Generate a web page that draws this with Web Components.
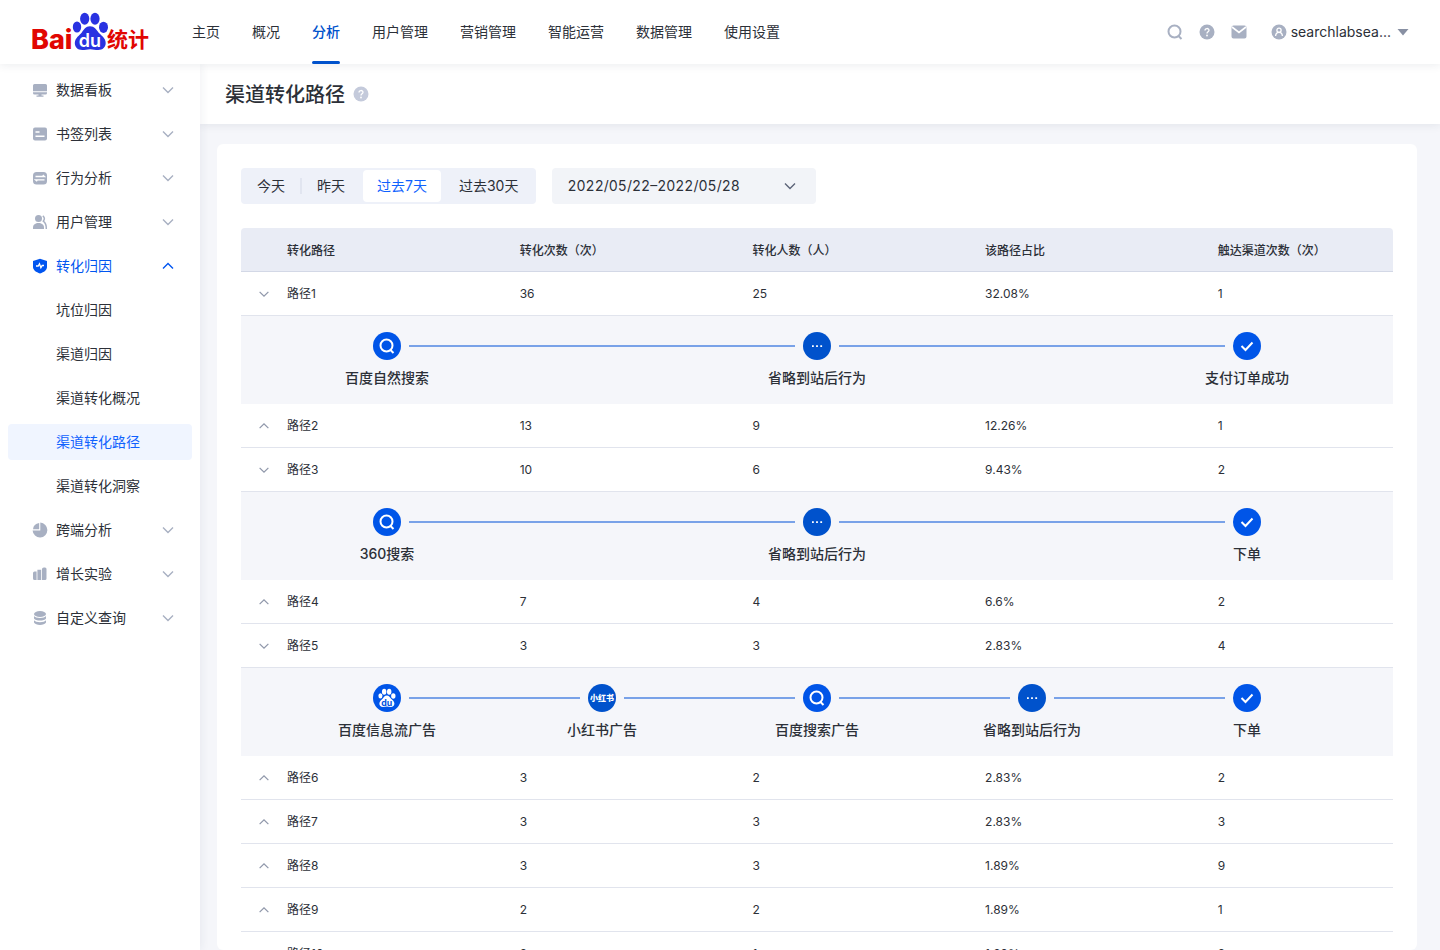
<!DOCTYPE html>
<html lang="zh-CN">
<head>
<meta charset="utf-8">
<title>渠道转化路径 - 百度统计</title>
<style>
  :root {
    --blue: #0055f0;
    --deep-blue: #0052cc;
    --ink: #2c3038;
    --muted: #a8b0c2;
    --canvas: #f5f6fa;
  }
  html, body { margin: 0; height: 100%; }
  body {
    font: 14px/20px Inter, "Noto Sans CJK SC", sans-serif;
    color: var(--ink);
    background: var(--canvas);
  }
</style>
</head>
<body>
<app-shell>
  <site-header slot="header"></site-header>
  <side-nav slot="nav"></side-nav>
  <page-title slot="title">渠道转化路径</page-title>
  <content-card>
    <filter-bar slot="filters"></filter-bar>
    <path-table></path-table>
  </content-card>
</app-shell>

<script>
const define = (name, render) => customElements.define(name, class extends HTMLElement {
  constructor() {
    super();
    this.attachShadow({ mode: "open" });
  }
  connectedCallback() {
    this.shadowRoot.innerHTML = render(this);
  }
});

const ICONS = {
  search: '<circle cx="7.5" cy="7.5" r="6" fill="none" stroke="currentColor" stroke-width="2"/><path d="M11.5 12 14.5 15" stroke="currentColor" stroke-width="2"/>',
  help: '<circle cx="8" cy="8" r="7.5" fill="currentColor"/><path d="M6 6.5c0-2.600 4-2.600 4-.2C10 7.700 8 7.800 8 9.400" fill="none" stroke="#fff" stroke-width="1.300"/><circle cx="8" cy="11.500" r=".9" fill="#fff"/>',
  mail: '<path d="M.5 3.500a2 2 0 0 1 2-2h11a2 2 0 0 1 2 2v9a2 2 0 0 1-2 2h-11a2 2 0 0 1-2-2z" fill="currentColor"/><path d="m1 3 7 5.500L15 3" fill="none" stroke="#fff" stroke-width="1.600"/>',
  user: '<circle cx="8" cy="8" r="7.500" fill="currentColor"/><circle cx="8" cy="6.300" r="2.100" fill="none" stroke="#fff" stroke-width="1.300"/><path d="M4.600 12c.2-2.300 1.600-3.600 3.400-3.600s3.200 1.300 3.400 3.600" fill="none" stroke="#fff" stroke-width="1.300"/>',
  caret: '<path d="M2.500 5h11L8 11.500z" fill="currentColor"/>',
  down: '<path d="m3 5.500 5 5 5-5" fill="none" stroke="currentColor" stroke-width="1.400"/>',
  up: '<path d="m3 10.500 5-5 5 5" fill="none" stroke="currentColor" stroke-width="1.400"/>',
  board: '<path d="M1 3.500A1.500 1.500 0 0 1 2.500 2h11A1.500 1.500 0 0 1 15 3.500V9.300H1zM1 10.200h14v.8a1.500 1.500 0 0 1-1.500 1.500h-11A1.500 1.500 0 0 1 1 11zM6.500 12h3v1.500h2V14.700h-7V13.500h2z" fill="currentColor"/>',
  bookmark: '<rect x="1" y="1.500" width="14" height="13" rx="2" fill="currentColor"/><path d="M3.500 6h4M3.500 10.300h9" stroke="#fff" stroke-width="1.400"/>',
  behavior: '<rect x="1" y="2" width="14" height="12.500" rx="3.500" fill="currentColor"/><path d="M3.500 6.500h9L10.800 5M12.500 9.800h-9l1.700 1.500" fill="none" stroke="#fff" stroke-width="1.300"/>',
  users: '<circle cx="6.500" cy="4.500" r="3.500" fill="currentColor"/><path d="M1 15v-1.500C1 10.500 3.500 9 6.500 9S12 10.500 12 13.500V15z" fill="currentColor"/><path d="M10.800 1.800c2 1.400 2 3.500.5 5.400 2 1.500 3.200 3.600 3 7.800" fill="none" stroke="currentColor" stroke-width="1.500"/>',
  shield: '<path d="M8 .8 15 3v6c0 3-3 5.200-7 6.500C4 14.200 1 12 1 9V3z" fill="currentColor"/><path d="M4 8h2.200l1.300-2.200 1.400 3.900L10.200 7.500H12" fill="none" stroke="#fff" stroke-width="1.300"/>',
  pie: '<path d="M8.300.6a7.400 7.400 0 1 1-7.700 7.900h7.700z" fill="currentColor"/><path d="M7.200 1v6.300H1A7 7 0 0 1 7.200 1" fill="currentColor"/>',
  bars: '<path d="M1 7a1.500 1.500 0 0 1 1.500-1.500H4.600V14H2.500A1.500 1.500 0 0 1 1 12.500zM5.400 3.800h3.700V14H5.400zM9.900 3.500a2 2 0 0 1 2-2H13a1.500 1.500 0 0 1 1.500 1.500v9.500A1.500 1.500 0 0 1 13 14H9.900z" fill="currentColor"/>',
  database: '<ellipse cx="8" cy="4" rx="6" ry="3" fill="currentColor"/><path d="M2 6c1.500 2.600 10.500 2.600 12 0v2.500c-1.500 2.800-10.500 2.800-12 0zM2 10.200c1.500 2.600 10.500 2.600 12 0v2.300c-1.500 3.300-10.500 3.300-12 0z" fill="currentColor"/>',
  dots: '<path d="M3 7.200h1.800V9H3zm4.100 0h1.800V9H7.100zm4.200 0h1.800V9h-1.800z" fill="currentColor"/>',
  check: '<path d="m2.500 8 4 4 7-7.500" fill="none" stroke="currentColor" stroke-width="2"/>'
};

define("ui-icon", el => `
  <style>
    :host { display: inline-flex; flex: none; width: 16px; height: 16px; }
    svg { width: 100%; height: 100%; }
  </style>
  <svg viewBox="0 0 16 16" aria-hidden="true">${ICONS[el.getAttribute("name")]}</svg>`);

const PAW = `
  <ellipse cx="77" cy="27" rx="4.200" ry="5.500"/>
  <ellipse cx="84.700" cy="18.700" rx="4.600" ry="6"/>
  <ellipse cx="95" cy="18.700" rx="4.600" ry="6"/>
  <ellipse cx="103.500" cy="27.300" rx="4.500" ry="5.600"/>
  <path d="M90 26.300c4.500 0 6.200 3.200 8.500 6.200 2.300 2.800 7.200 5.300 7.200 10.500 0 4.200-3 7-7.500 7-3 0-5-.8-8-.8s-5 .8-8 .8c-4.500 0-7.400-2.800-7.400-7 0-5.200 5-7.700 7-10.500 2.200-3 3.700-6.200 8.200-6.200z"/>`;

define("brand-logo", () => `
  <style>
    :host { display: block; flex: none; }
    a, svg { display: block; }
    text { font-weight: 800; }
    .du { font-weight: 600; }
    .name { font-weight: 700; }
  </style>
  <a href="#" aria-label="百度统计">
    <svg width="118" height="40" viewBox="32 12 118 40">
      <text x="31" y="49" font-size="27" fill="#e10602">Bai</text>
      <g fill="#2932e1">${PAW}</g>
      <text class="du" x="90" y="47" font-size="18" text-anchor="middle" fill="#fff">du</text>
      <text class="name" x="107" y="47" font-size="21" fill="#e10602">统计</text>
    </svg>
  </a>`);

define("site-header", () => `
  <style>
    :host {
      display: flex; align-items: center; box-sizing: border-box; height: 64px; padding: 0 29px 0 32px;
      background: #fff; box-shadow: 0 2px 8px rgba(40, 50, 80, .08);
    }
    nav { display: flex; gap: 32px; margin-left: 42px; align-self: stretch; }
    nav a {
      display: flex; align-items: center; box-sizing: border-box; color: inherit; text-decoration: none;
    }
    nav a[aria-current] { color: var(--deep-blue); font-weight: 500; position: relative; }
    nav a[aria-current]::after {
      content: ""; position: absolute; left: 0; right: 0; bottom: 0; height: 3px;
      border-radius: 2px; background: var(--deep-blue);
    }
    .tools { display: flex; align-items: center; gap: 16px; margin-left: auto; }
    button {
      display: flex; align-items: center; padding: 0; border: 0; background: none;
      font: inherit; color: var(--muted); cursor: pointer;
    }
    .account { margin-left: 8px; gap: 4px; }
    .account span { color: var(--ink); }
    .account ui-icon:last-child { color: #8890a3; }
  </style>
  <brand-logo></brand-logo>
  <nav aria-label="主导航">
    ${["主页", "概况", "分析", "用户管理", "营销管理", "智能运营", "数据管理", "使用设置"].map(t =>
      `<a href="#"${t === "分析" ? ' aria-current="page"' : ""}>${t}</a>`).join("")}
  </nav>
  <div class="tools">
    <button aria-label="搜索"><ui-icon name="search"></ui-icon></button>
    <button aria-label="帮助"><ui-icon name="help"></ui-icon></button>
    <button aria-label="消息"><ui-icon name="mail"></ui-icon></button>
    <button class="account"><ui-icon name="user"></ui-icon><span>searchlabsea...</span><ui-icon name="caret"></ui-icon></button>
  </div>`);

const MENU = [
  ["board", "数据看板"], ["bookmark", "书签列表"], ["behavior", "行为分析"], ["users", "用户管理"],
  ["shield", "转化归因", ["坑位归因", "渠道归因", "渠道转化概况", "渠道转化路径", "渠道转化洞察"]],
  ["pie", "跨端分析"], ["bars", "增长实验"], ["database", "自定义查询"]
];

define("side-nav", () => `
  <style>
    :host { display: block; background: #fff; box-shadow: 2px 0 8px rgba(40, 50, 80, .06); }
    nav { display: grid; gap: 8px; padding: 8px; }
    button, a {
      display: flex; align-items: center; gap: 8px; box-sizing: border-box; width: 100%; height: 36px;
      padding: 0 16px 0 24px; border: 0; border-radius: 4px; background: none;
      font: inherit; color: inherit; text-decoration: none; cursor: pointer;
    }
    a { padding-left: 48px; }
    button ui-icon { color: var(--muted); }
    button ui-icon:last-child { margin-left: auto; }
    [aria-expanded=true], [aria-expanded=true] ui-icon { color: var(--blue); }
    [aria-current] { background: #f0f5ff; color: #0f62fe; }
  </style>
  <nav aria-label="分析导航">
    ${MENU.map(([icon, label, children]) => `
      <button aria-expanded="${!!children}"><ui-icon name="${icon}"></ui-icon><span>${label}</span><ui-icon name="${children ? "up" : "down"}"></ui-icon></button>
      ${(children || []).map(c => `<a href="#"${c === "渠道转化路径" ? ' aria-current="page"' : ""}>${c}</a>`).join("")}`).join("")}
  </nav>`);

define("page-title", () => `
  <style>
    :host {
      display: flex; align-items: center; gap: 8px; height: 60px; padding-left: 25px;
      background: #fff; box-shadow: 0 2px 8px rgba(40, 50, 80, .08);
    }
    h1 { margin: 0; padding-top: 2px; font-size: 20px; line-height: 28px; font-weight: 500; }
    ui-icon { color: #c4cadb; }
  </style>
  <h1><slot></slot></h1><ui-icon name="help"></ui-icon>`);

define("content-card", () => `
  <style>
    :host {
      display: block; flex: 1; min-height: 0; box-sizing: border-box; overflow-y: auto; scrollbar-width: none;
      margin: 20px 23px 0 17px; padding: 24px; border-radius: 6px; background: #fff;
    }
  </style>
  <slot name="filters"></slot><slot></slot>`);

define("filter-bar", () => `
  <style>
    :host { display: flex; gap: 16px; margin-bottom: 24px; }
    .segments {
      display: flex; gap: 4px; box-sizing: border-box; height: 36px; padding: 2px 4px 2px 2px;
      border-radius: 4px; background: #eef1f9;
    }
    button {
      padding: 0 14px; border: 0; border-radius: 4px; background: none;
      font: inherit; color: inherit; cursor: pointer;
    }
    button[aria-pressed=true] { background: #fff; color: #0f62fe; }
    i { width: 2px; height: 16px; margin: 8px -3px; background: #e1e5f0; }
    .range { display: flex; position: relative; width: 264px; }
    select {
      appearance: none; width: 100%; height: 36px; padding: 0 40px 0 15px; border: 0; border-radius: 4px;
      background: #f2f4f8; font: inherit; font-variant-numeric: tabular-nums; color: inherit;
    }
    .range ui-icon { position: absolute; right: 18px; top: 10px; color: #5c6478; pointer-events: none; }
  </style>
  <div class="segments" role="group" aria-label="时间范围">
    <button aria-pressed="false">今天</button><i></i>
    <button aria-pressed="false">昨天</button>
    <button aria-pressed="true">过去7天</button>
    <button aria-pressed="false">过去30天</button>
  </div>
  <label class="range">
    <select aria-label="日期"><option>2022/05/22–2022/05/28</option></select>
    <ui-icon name="down"></ui-icon>
  </label>`);

define("path-step", el => {
  const kind = el.getAttribute("kind");
  const mark = {
    paw: `<svg width="18" height="20" viewBox="72 12 37 39"><g fill="#fff">${PAW}</g><text x="90" y="47" font-size="18" font-weight="700" text-anchor="middle" fill="#0052e0">du</text></svg>`,
    red: "<b>小红书</b>"
  }[kind] || `<ui-icon name="${kind}"></ui-icon>`;
  return `
  <style>
    :host { display: flex; flex-direction: column; align-items: center; gap: 8px; width: 28px; }
    .dot {
      display: flex; align-items: center; justify-content: center; width: 28px; height: 28px;
      border-radius: 50%; background: ${kind === "dots" || kind === "red" ? "var(--deep-blue)" : "#0055e8"}; color: #fff;
    }
    b { font-size: 8px; line-height: 12px; font-weight: 900; white-space: nowrap; }
    .label { font-weight: 500; white-space: nowrap; }
  </style>
  <div class="dot">${mark}</div><div class="label"><slot></slot></div>`;
});

define("path-flow", el => {
  const steps = el.getAttribute("steps").split(",").map(s => s.split(":"));
  return `
  <style>
    :host { display: flex; box-sizing: border-box; height: 88px; padding: 16px 132px; background: var(--canvas); }
    hr { flex: 1; height: 2px; margin: 13px 8px; border: 0; background: #79a2e8; }
  </style>
  ${steps.map(([kind, label]) => `<path-step kind="${kind}">${label}</path-step>`).join("<hr>")}`;
});

const ROWS = [
  [36, 25, "32.08%", 1, "search:百度自然搜索,dots:省略到站后行为,check:支付订单成功"],
  [13, 9, "12.26%", 1],
  [10, 6, "9.43%", 2, "search:360搜索,dots:省略到站后行为,check:下单"],
  [7, 4, "6.6%", 2],
  [3, 3, "2.83%", 4, "paw:百度信息流广告,red:小红书广告,search:百度搜索广告,dots:省略到站后行为,check:下单"],
  [3, 2, "2.83%", 2],
  [3, 3, "2.83%", 3],
  [3, 3, "1.89%", 9],
  [2, 2, "1.89%", 1],
  [2, 1, "1.89%", 2]
];

define("path-table", () => `
  <style>
    :host { display: block; }
    table { width: 100%; table-layout: fixed; border-collapse: separate; border-spacing: 0; font-size: 12px; }
    .toggle { width: 46px; }
    .data { width: 20.2%; }
    th, td { box-sizing: border-box; height: 44px; padding: 0; text-align: left; }
    th { padding-top: 2px; background: #e9ecf5; border-bottom: 1px solid #d3d8e6; font-weight: 500; }
    th:first-child { border-top-left-radius: 4px; }
    th:last-child { border-top-right-radius: 4px; }
    td { border-bottom: 1px solid #e1e4ed; }
    td.flow { height: 88px; border: 0; font-size: 14px; }
    button { display: flex; margin-left: 16px; padding: 0; border: 0; background: none; color: #8f97aa; cursor: pointer; }
    button ui-icon { width: 14px; height: 14px; }
  </style>
  <table>
    <colgroup><col class="toggle"><col class="data"><col class="data"><col class="data"><col class="data"><col></colgroup>
    <thead><tr><th></th><th>转化路径</th><th>转化次数（次）</th><th>转化人数（人）</th><th>该路径占比</th><th>触达渠道次数（次）</th></tr></thead>
    <tbody>
      ${ROWS.map(([times, people, share, touches, steps], i) => `
        <tr>
          <td><button aria-label="路径${i + 1}" aria-expanded="${!!steps}"><ui-icon name="${steps ? "down" : "up"}"></ui-icon></button></td>
          <td>路径${i + 1}</td><td>${times}</td><td>${people}</td><td>${share}</td><td>${touches}</td>
        </tr>
        ${steps ? `<tr><td class="flow" colspan="6"><path-flow steps="${steps}"></path-flow></td></tr>` : ""}`).join("")}
    </tbody>
  </table>`);

define("app-shell", () => `
  <style>
    :host { display: grid; grid-template: 64px minmax(0, 1fr) / 200px minmax(0, 1fr); height: 100vh; }
    slot[name=header] { display: block; grid-column: 1 / -1; z-index: 2; }
    slot[name=nav] { display: grid; z-index: 1; }
    main { display: flex; flex-direction: column; min-height: 0; }
  </style>
  <slot name="header"></slot>
  <slot name="nav"></slot>
  <main><slot name="title"></slot><slot></slot></main>`);
</script>
</body>
</html>
